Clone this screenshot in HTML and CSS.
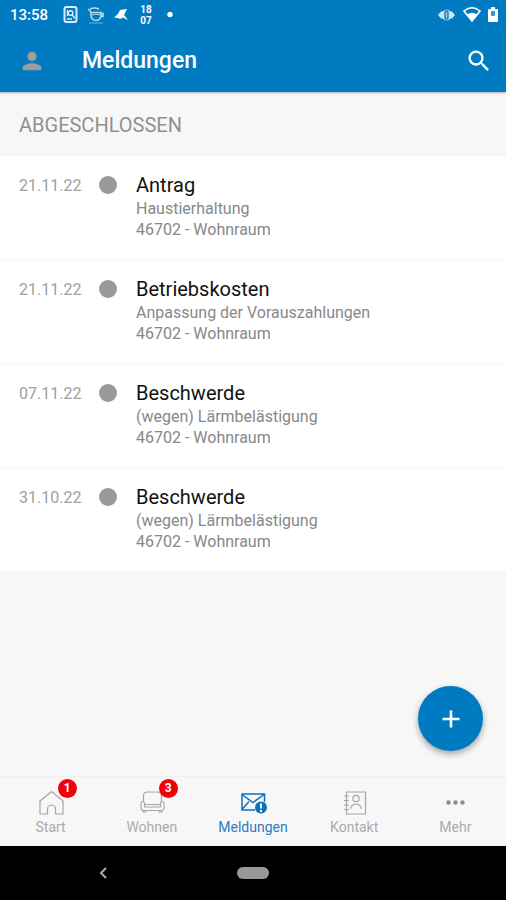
FILE: index.html
```html
<!DOCTYPE html>
<html lang="de">
<head>
<meta charset="utf-8">
<meta name="viewport" content="width=device-width, initial-scale=1">
<title>Meldungen</title>
<link rel="stylesheet" href="styles.css">
</head>
<body>
<div class="app">
  <header class="top">
    <div class="status">
      <span class="clock">13:58</span>
      <svg class="sicon" viewBox="0 0 20 20"><rect x="3.500" y="2" width="12" height="15" rx="2" fill="none" stroke="#dcecf8" stroke-width="2"/><circle cx="9.500" cy="8" r="2.300" fill="none" stroke="#dcecf8" stroke-width="1.400"/><path d="M11 9.500l3 4M6 14h5M6.500 5v6" fill="none" stroke="#dcecf8" stroke-width="1.400"/></svg>
      <svg class="sicon" viewBox="0 0 20 20"><path d="M5 7.500h10v3a5 5 0 0 1-10 0zM15 8.500h2v3h-2M2 4l4 4M4 4q4-2 9 0" fill="none" stroke="#b9d9ef" stroke-width="1.600"/><path d="M6 10q4-2 8 0" stroke="#b9d9ef" fill="none"/><path d="M3 18h14" stroke="#6db0dc"/></svg>
      <svg class="sicon" viewBox="0 0 20 20"><path d="M3 12.500L7 9l2-4 7-1-3 6 4 5-5-2.500-3 1.500-2-1z" fill="#fff"/></svg>
      <span class="stacked"><span>18</span><span>07</span></span>
      <svg class="sicon" viewBox="0 0 20 20"><circle cx="9" cy="9.500" r="2.700" fill="#fff"/></svg>
      <span class="status-right">
        <svg class="sicon" viewBox="0 0 20 20"><path d="M1 10l3-3.500h1.500Q9.500 2.500 13.500 6.500H15l3 3.500-3 3.500h-1.500q-4 4-8 0H4z" fill="#cfe4f4"/><rect x="8" y="6" width="3" height="8" rx="1" fill="#9cc9e8" stroke="#007bc2" stroke-width="1.300"/></svg>
        <svg class="sicon" viewBox="0 0 20 20"><path d="M2 6Q10-.5 18 6L10 16z" fill="none" stroke="#fff" stroke-width="1.600"/><path d="M5 9.500Q10 6 15 9.500L10 16z" fill="#fff"/></svg>
        <svg class="battery" viewBox="0 0 12 20"><path d="M4 2h4v2h2q1 0 1 1v11q0 1-1 1H2q-1 0-1-1V5q0-1 1-1h2z" fill="#fff"/><rect x="4" y="6" width="4" height="5" rx="1" fill="#3993cd"/></svg>
      </span>
    </div>
    <div class="bar">
      <button class="icon-btn" aria-label="Profil"><svg width="28" height="28" viewBox="0 0 24 24" fill="#9d9d9d"><path d="M12 12a4 4 0 1 0 0-8 4 4 0 0 0 0 8zm0 2c-2.700 0-8 1.300-8 4v2h16v-2c0-2.700-5.300-4-8-4z"/></svg></button>
      <h1>Meldungen</h1>
      <button class="icon-btn" aria-label="Suchen"><svg width="28" height="28" viewBox="0 0 24 24" fill="#fff"><path d="M15.500 14h-.8l-.3-.3A6.500 6.500 0 1 0 13.700 14.400l.3.3v.8l5 5 1.500-1.500zm-6 0a4.500 4.500 0 1 1 0-9 4.500 4.500 0 0 1 0 9z"/></svg></button>
    </div>
  </header>
  <main>
    <h2>ABGESCHLOSSEN</h2>
    <ul class="list">
      <li><time>21.11.22</time><span class="dot"></span><div><h3>Antrag</h3><p>Haustierhaltung</p><p>46702 - Wohnraum</p></div></li>
      <li><time>21.11.22</time><span class="dot"></span><div><h3>Betriebskosten</h3><p>Anpassung der Vorauszahlungen</p><p>46702 - Wohnraum</p></div></li>
      <li><time>07.11.22</time><span class="dot"></span><div><h3>Beschwerde</h3><p>(wegen) Lärmbelästigung</p><p>46702 - Wohnraum</p></div></li>
      <li><time>31.10.22</time><span class="dot"></span><div><h3>Beschwerde</h3><p>(wegen) Lärmbelästigung</p><p>46702 - Wohnraum</p></div></li>
    </ul>
    <button class="fab" aria-label="Neue Meldung"><svg width="28" height="28" viewBox="0 0 28 28"><path d="M14 5.500v17M5.500 14h17" stroke="#fff" stroke-width="2.600"/></svg></button>
  </main>
  <nav class="tabs">
    <a href="#start"><span class="tab-icon"><svg width="28" height="28" viewBox="0 0 28 28"><path d="M3 12L14.500 2.500 26 12v13h-7.500v-5a4 4 0 0 0-8 0v5H3z"/></svg><b class="badge">1</b></span>Start</a>
    <a href="#wohnen"><span class="tab-icon"><svg width="28" height="28" viewBox="0 0 28 28"><path d="M5.500 12.500V7q0-4 4-4h10q4 0 4 4v5.500M6.500 15.500h16M6.500 18v-4q-.5-1.500-2-1.500T3 14.500V19q0 2.500 2.500 2.500h18Q26 21.500 26 19v-4.500q0-2-1.500-2t-2 1.500v4zM5.500 21.500V23h2v-1.500M21.500 21.500V23h2v-1.500"/></svg><b class="badge">3</b></span>Wohnen</a>
    <a href="#meldungen" class="active" aria-current="page"><span class="tab-icon"><svg width="28" height="28" viewBox="0 0 28 28"><path d="M16 21H3V5h22.500v8M3 5.500l11 8 11-8M3 20.500l7-8" stroke-width="1.500"/><circle cx="22" cy="18.500" r="6" fill="#0c72bb" stroke="none"/><path d="M22 14.500v5M22 21v2" stroke="#fff" stroke-width="2"/></svg></span>Meldungen</a>
    <a href="#kontakt"><span class="tab-icon"><svg width="28" height="28" viewBox="0 0 28 28"><path d="M6.500 3h19v22h-19zM4 7h5M4 11.500h5M4 16h5M4 20.500h5M10.500 20q1-5 5.500-5t5.500 5"/><circle cx="16" cy="9.500" r="3.200"/></svg></span>Kontakt</a>
    <a href="#mehr"><span class="tab-icon"><svg width="28" height="28" viewBox="0 0 28 28"><g fill="#8c8c8c" stroke="none"><circle cx="7.500" cy="13.500" r="2.200"/><circle cx="14.500" cy="13.500" r="2.200"/><circle cx="21.500" cy="13.500" r="2.200"/></g></svg></span>Mehr</a>
  </nav>
  <div class="system">
    <button class="back" aria-label="Zurück"><svg width="16" height="16" viewBox="0 0 16 16"><path d="M11 3L6 8l5 5" fill="none" stroke="#aaa" stroke-width="2"/></svg></button>
    <button class="home" aria-label="Startbildschirm"></button>
  </div>
</div>
</body>
</html>
```
FILE: styles.css
```css
* { box-sizing: border-box; }
body, h1, h2, h3, p, ul { margin: 0; padding: 0; }
body { font-family: Roboto, "Liberation Sans", sans-serif; background: #f7f7f7; }
button { border: 0; padding: 0; background: none; display: grid; place-items: center; }
svg { display: block; }
.app { min-height: 100vh; display: flex; flex-direction: column; }
.top { background: #007bc2; color: #fff; box-shadow: 0 1px 2px rgba(0, 0, 0, .3); }
.status { display: flex; align-items: center; height: 29px; padding: 0 7px 0 10px; gap: 5px; }
.clock { font-size: 15px; font-weight: 500; margin-right: 8px; }
.sicon { width: 20px; height: 20px; }
.stacked { width: 20px; display: grid; font-size: 10px; line-height: 11px; font-weight: 700; text-align: center; }
.status-right { margin-left: auto; display: flex; gap: 5px; }
.battery { width: 12px; height: 20px; }
.bar { display: flex; align-items: center; height: 63px; padding: 0 13px 0 18px; }
h1 { flex: 1; margin-left: 36px; font-size: 23px; font-weight: 500; }
main { flex: 1; position: relative; }
h2 { padding: 0 19px; font-size: 20px; line-height: 66px; height: 64px; font-weight: 400; color: #909090; }
.list { list-style: none; background: #fff; }
.list li { display: flex; height: 104px; padding: 16px 19px 0; border-bottom: 1px solid #f6f6f6; }
.list li:last-child { height: 103px; border-bottom: 0; }
time { width: 80px; font-size: 16px; line-height: 28px; color: #a0a0a0; }
.dot { width: 18px; height: 18px; margin: 4px 19px 0 0; border-radius: 50%; background: #999; }
h3 { font-size: 20px; line-height: 26px; font-weight: 400; color: #111; }
p { font-size: 16px; line-height: 21px; color: #888; }
.fab { position: absolute; right: 23px; bottom: 25px; width: 65px; height: 65px; border-radius: 50%; background: #007bc2; box-shadow: 0 3px 6px rgba(0, 0, 0, .35); }
.tabs { display: grid; grid-template-columns: repeat(5, 1fr); height: 70px; border-top: 1px solid #f0f0f0; }
.tabs a { display: flex; flex-direction: column; align-items: center; padding-top: 12px; font-size: 14px; line-height: 21px; color: #ababab; text-decoration: none; }
.tabs .active { color: #2a7dc1; }
.tab-icon { position: relative; fill: none; stroke: #a6a6a6; stroke-width: 1.2px; }
.active .tab-icon { stroke: #0c72bb; }
.badge { position: absolute; left: 21px; top: -10px; width: 19px; height: 19px; border-radius: 50%; background: #f4000b; color: #fff; font-size: 12px; line-height: 19px; text-align: center; }
.system { display: flex; align-items: center; justify-content: center; gap: 118px; padding-right: 150px; height: 54px; background: #000; }
.back { width: 32px; height: 32px; }
.home { width: 32px; height: 12px; border-radius: 6px; background: #999; }
```
